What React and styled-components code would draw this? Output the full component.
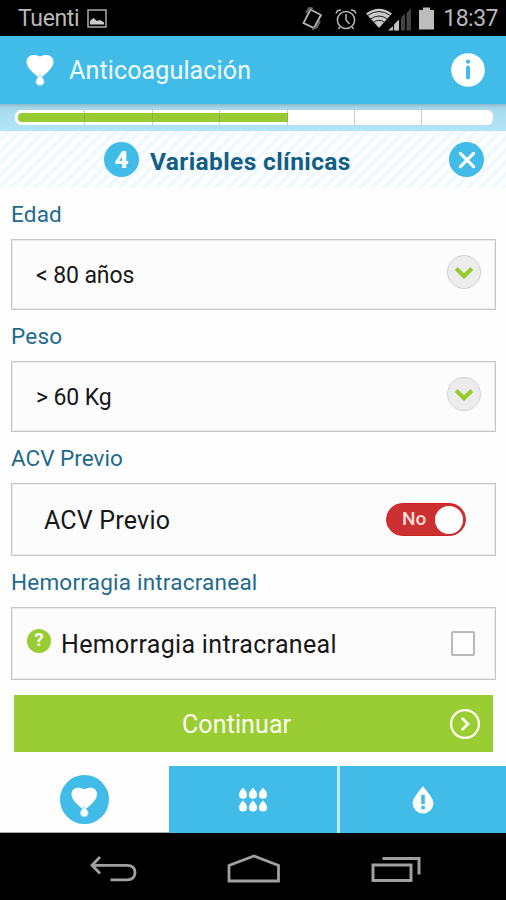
import React from "react";
import styled, { createGlobalStyle } from "styled-components";

const GlobalStyle = createGlobalStyle`
  *, *::before, *::after { box-sizing: border-box; }
  body { margin: 0; background: #fff; font-family: Roboto, sans-serif; }
  svg { display: block; flex: none; }
`;

const BLUE = "#41bce9";
const GREEN = "#9acd33";

const Screen = styled.div`
  width: 506px;
  height: 900px;
  display: flex;
  flex-direction: column;
  overflow: hidden;
  background: #fefefe;
`;

const Label = styled.span`
  font-size: ${(p) => p.$size}px;
  letter-spacing: ${(p) => p.$track || 0}px;
  font-weight: ${(p) => p.$weight || 400};
  line-height: 1.2;
  white-space: nowrap;
`;

const StatusBar = styled.div`
  height: 36px;
  flex: none;
  display: flex;
  align-items: center;
  justify-content: space-between;
  padding: 2px 8px 0 18px;
  background: #000;
  color: #b9b9b9;
`;

const StatusGroup = styled.div`
  display: flex;
  align-items: center;
  gap: 8px;
`;

const Header = styled.header`
  height: 68px;
  flex: none;
  display: flex;
  align-items: center;
  padding: 0 21px 0 26px;
  background: ${BLUE};
  color: #f2fbff;
`;

const HeaderTitle = styled.div`
  flex: 1;
  padding: 1px 0 0 15px;
`;

const ProgressStrip = styled.div`
  height: 27px;
  flex: none;
  padding: 6px 13px 0 15px;
  background: linear-gradient(#8db9cb 0, #a9d7ea 4px, #ade0f4 14px, #b2e4f7 100%);
`;

const ProgressTrack = styled.div`
  height: 15px;
  padding: 3px;
  display: flex;
  border-radius: 6px;
  background: #fff;
`;

const Segment = styled.div`
  width: ${(p) => p.$width}px;
  height: 15px;
  margin-top: -3px;
  padding: 3px 0;
  background: ${(p) => (p.$last ? "none" : "linear-gradient(#c9cbc9, #c9cbc9) right / 1px 100% no-repeat")};

  &::before {
    content: "";
    display: block;
    height: 9px;
    background: ${(p) => (p.$done ? "linear-gradient(90deg, #97cb30 calc(100% - 1px), #8fb54a 0)" : "transparent")};
    border-radius: ${(p) => (p.$first ? "4px 0 0 4px" : "0")};
  }
`;

const StepBar = styled.div`
  height: 57px;
  flex: none;
  display: flex;
  align-items: center;
  padding: 0 22px 0 104px;
  color: #125e84;
  background: repeating-linear-gradient(
    135deg,
    #fdffff 0,
    #fdffff 2.8px,
    #f0f9fd 4.6px,
    #f0f9fd 7px,
    #fdffff 8.5px
  );
`;

const StepTitle = styled.h1`
  flex: 1;
  margin: 0;
  padding: 4px 0 0 11px;
  font-size: 24px;
  line-height: 1.2;
  display: flex;
`;

const Badge = styled.span`
  width: ${(p) => p.$size}px;
  height: ${(p) => p.$size}px;
  flex: none;
  display: flex;
  align-items: center;
  justify-content: center;
  margin-bottom: ${(p) => p.$lift || 0}px;
  padding-top: ${(p) => p.$drop || 0}px;
  border-radius: 50%;
  background: ${(p) => p.$color};
  color: #fff;
`;

const Form = styled.main`
  flex: none;
  padding: 0 10px 0 11px;
`;

const FieldLabel = styled.div`
  height: 51px;
  padding-top: 13px;
  display: flex;
  color: #1e6a8d;
`;

const FieldBox = styled.div`
  height: ${(p) => p.$height}px;
  display: flex;
  align-items: center;
  justify-content: space-between;
  padding: 2px ${(p) => p.$right}px 0 ${(p) => p.$left}px;
  border: 1px solid #c6c6c6;
  box-shadow: inset 0 0 0 1px #ececec;
  background: #fcfcfc;
  color: #181818;
`;

const SelectKnob = styled.span`
  width: 34px;
  height: 34px;
  margin-bottom: 7px;
  padding-top: 2px;
  display: flex;
  align-items: center;
  justify-content: center;
  border: 1px solid #d2d2d2;
  border-radius: 50%;
  background: #ececec;
`;

const Toggle = styled.span`
  width: 80px;
  height: 33px;
  margin-bottom: 2px;
  display: flex;
  align-items: center;
  justify-content: space-between;
  padding: 0 2px 0 15px;
  border-radius: 17px;
  background: #cd3030;
  border: 1px solid #d02020;
  color: #ffdcdc;
`;

const ToggleDot = styled.span`
  width: 28px;
  height: 28px;
  border-radius: 50%;
  background: #fff;
`;

const CheckGroup = styled.div`
  display: flex;
  align-items: center;
  gap: 10px;
`;

const CheckBox = styled.span`
  width: 24px;
  height: 25px;
  margin-bottom: 2px;
  border: 2px solid #b9b9b9;
  border-radius: 2px;
  background: #fdfdfd;
`;

const Continue = styled.div`
  height: 57px;
  margin: 15px 13px 14px 14px;
  flex: none;
  display: grid;
  grid-template-columns: 1fr auto;
  align-items: center;
  padding: 3px 12px 0 168px;
  background: ${GREEN};
  color: #fafff0;

  svg { margin-bottom: 3px; }
`;

const Tabs = styled.nav`
  height: 67px;
  flex: none;
  display: grid;
  grid-template-columns: 169px 168px 1fr;
  background: #c4e9f8;
`;

const Tab = styled.div`
  display: flex;
  align-items: center;
  justify-content: center;
  margin-left: ${(p) => p.$gap || 0}px;
  background: ${(p) => (p.$active ? "#fefefe" : BLUE)};
  border-bottom: ${(p) => (p.$active ? "1px solid #a8a8a8" : "0")};
`;

const NavBar = styled.div`
  flex: 1;
  display: flex;
  align-items: center;
  justify-content: space-between;
  padding: 4px 85px 0 89px;
  background: #000;
`;

function StatusIcons() {
  return (
    <svg width="135" height="28" viewBox="300 4 135 28" fill="none" stroke="#b5b5b5" strokeWidth="1.5">
      <path d="M310.5 8.500 L321 14 L314 27 L303.500 22 Z" strokeWidth="1.800" />
      <path d="M306 12 L309 7 L313 7.500 M320 20 L317 26 L312 28.500" stroke="#666" strokeWidth="1.800" />
      <circle cx="346" cy="19" r="8.600" />
      <path d="M346 13 V19 L349.500 23 M336 12.500 A5 5 0 0 1 341 9 M351 9 A5 5 0 0 1 356 12.500 M340 26 L338.500 28 M352 26 L353.500 28" />
      <path d="M379 27 L366 12.500 Q379 3 392 12.500 Z" fill="#c9c9c9" stroke="none" />
      <path d="M367.500 14.500 Q379 6.500 390.500 14.500 M370.500 18 Q379 12 387.500 18 M373.500 21.300 Q379 17.300 384.500 21.300" stroke="#222" strokeWidth="1" />
      <path d="M388 29.500 L393 25 V29.500 Z" fill="#bbb" stroke="none" />
      <path d="M394 29.500 V23.500 L399 18.500 V29.500 Z" fill="#c4c4c4" stroke="none" />
      <path d="M401 29.500 V16.500 L405 12.500 V29.500 Z M406.500 29.500 V12 L411 7.500 V29.500 Z" fill="#444" stroke="none" />
      <path d="M419 9 H423 V6.500 H430 V9 H434 V28.500 H419 Z" fill="#bdbdbd" stroke="none" />
    </svg>
  );
}

function PictureIcon() {
  return (
    <svg width="20" height="21" viewBox="0 0 20 21" fill="none" stroke="#aaa" strokeWidth="1.5">
      <rect x="1" y="1" width="18" height="17" />
      <path d="M3 15.500 V12 L6.500 9 L10 12 L13 11 L17 13.500 V15.500 Z" fill="#ccc" stroke="none" />
    </svg>
  );
}

function HeartDrop({ width, ring }) {
  return (
    <svg width={width} height={width * 1.14} viewBox="0 0 28 32">
      <path d="M14 24.500 C10 21.500 6.500 18.600 4 15.600 C1.800 13 0.500 10.500 0.500 7.800 C0.500 3.700 3.500 0.900 7.400 0.900 C10 0.900 12 1.500 14 2.600 C16 1.500 18 0.900 20.600 0.900 C24.500 0.900 27.500 3.700 27.500 7.800 C27.500 10.500 26.200 13 24 15.600 C21.500 18.600 18 21.500 14 24.500 Z" fill="#fff" />
      <path d="M14 20.500 C15.300 23 18.100 25 18.100 27.600 A4.100 3.900 0 0 1 9.900 27.600 C9.900 25 12.700 23 14 20.500 Z" fill="#fff" stroke={ring} strokeWidth="0.900" />
    </svg>
  );
}

function InfoIcon() {
  return (
    <svg width="34" height="34" viewBox="0 0 34 34">
      <circle cx="17" cy="17" r="16.800" fill="#fff" />
      <circle cx="17" cy="8.700" r="2.100" fill={BLUE} />
      <path d="M17 14.500 V24.500" stroke={BLUE} strokeWidth="4" strokeLinecap="round" />
    </svg>
  );
}

function CrossIcon() {
  return (
    <svg width="18" height="18" viewBox="0 0 18 18" stroke="#fff" strokeWidth="3.200" strokeLinecap="round">
      <path d="M2.400 2.400 L15.600 15.600 M15.600 2.400 L2.400 15.600" />
    </svg>
  );
}

function ChevronIcon() {
  return (
    <svg width="20" height="14" viewBox="0 0 20 14" fill="none" stroke="#94cb28" strokeWidth="4">
      <path d="M2.200 2.500 L10 10.200 L17.800 2.500" />
    </svg>
  );
}

function NextIcon() {
  return (
    <svg width="32" height="32" viewBox="0 0 32 32" fill="none" stroke="#fbffee">
      <circle cx="16" cy="16" r="13.900" strokeWidth="2.300" />
      <path d="M13.600 10.700 L18.900 16 L13.600 21.300" strokeWidth="2.900" strokeLinecap="round" />
    </svg>
  );
}

function DropsIcon() {
  const drop = "c1.800 2 4.100 4.400 4.100 6.900 a4.100 4 0 0 1 -8.200 0 c0 -2.500 2.300 -4.900 4.100 -6.900 Z";
  return (
    <svg width="30" height="26" viewBox="0 0 30 26" fill="#fff">
      {[0, 12.8].flatMap((y) => [5, 15, 25].map((x) => <path key={`${x}-${y}`} d={`M${x} ${y + 0.8} ${drop}`} />))}
    </svg>
  );
}

function AlertDropIcon() {
  return (
    <svg width="22" height="28" viewBox="0 0 22 28">
      <path d="M11 0.300 C14.500 5 21.400 11.500 21.400 17.600 A10.400 9.800 0 0 1 0.600 17.600 C0.600 11.500 7.500 5 11 0.300 Z" fill="#fff" />
      <path d="M11 9 V18 M11 19.800 V23.200" stroke={BLUE} strokeWidth="3.600" />
    </svg>
  );
}

function BackIcon() {
  return (
    <svg width="48" height="28" viewBox="0 0 48 28" fill="none" stroke="#a0a0a0" strokeWidth="2.800">
      <path d="M11 2 L3 10.300 L11 18.500 M3 10.300 H38 Q46 10.300 46 17.500 Q46 24.800 38 24.800 H21.500" />
    </svg>
  );
}

function HomeIcon() {
  return (
    <svg width="54" height="30" viewBox="0 0 54 30" fill="none" stroke="#a0a0a0" strokeWidth="2.800">
      <path d="M2 27 V11.500 L27 2 L51.500 11.500 V27 Z" />
    </svg>
  );
}

function RecentsIcon() {
  return (
    <svg width="50" height="28" viewBox="0 0 50 28" fill="none" stroke="#a0a0a0" strokeWidth="3">
      <path d="M2 10 H40 V25.500 H2 Z M11.500 3.500 H48 V19.500" />
    </svg>
  );
}

function SelectField({ label, value }) {
  return (
    <>
      <FieldLabel>
        <Label $size={22.5} $track={0.2}>{label}</Label>
      </FieldLabel>
      <FieldBox $height={71} $left={24} $right={14}>
        <Label $size={23} $track={-0.1}>{value}</Label>
        <SelectKnob><ChevronIcon /></SelectKnob>
      </FieldBox>
    </>
  );
}

export default function App() {
  return (
    <Screen>
      <GlobalStyle />
      <StatusBar>
        <StatusGroup>
          <Label $size={23} $track={-0.35}>Tuenti</Label>
          <PictureIcon />
        </StatusGroup>
        <StatusGroup>
          <StatusIcons />
          <Label $size={23} $track={-0.5}>18:37</Label>
        </StatusGroup>
      </StatusBar>
      <Header>
        <HeartDrop width={28} ring="#9cdcf5" />
        <HeaderTitle><Label $size={25} $track={0.14}>Anticoagulación</Label></HeaderTitle>
        <InfoIcon />
      </Header>
      <ProgressStrip>
        <ProgressTrack>
          {[67, 68, 67, 68, 67, 67, 68].map((w, i) => (
            <Segment key={i} $width={w} $done={i < 4} $first={i === 0} $last={i === 6} />
          ))}
        </ProgressTrack>
      </ProgressStrip>
      <StepBar>
        <Badge $size={35} $color={BLUE} $drop={1}><Label $size={24} $weight={900}>4</Label></Badge>
        <StepTitle><Label $size={24.5} $track={0.38} $weight={700}>Variables clínicas</Label></StepTitle>
        <Badge $size={35} $color={BLUE}><CrossIcon /></Badge>
      </StepBar>
      <Form>
        <SelectField label="Edad" value="< 80 años" />
        <SelectField label="Peso" value="> 60 Kg" />
        <FieldLabel>
          <Label $size={22.5}>ACV Previo</Label>
        </FieldLabel>
        <FieldBox $height={73} $left={32} $right={29}>
          <Label $size={25} $track={0.2}>ACV Previo</Label>
          <Toggle><Label $size={19} $weight={500}>No</Label><ToggleDot /></Toggle>
        </FieldBox>
        <FieldLabel>
          <Label $size={22.5} $track={0.22}>Hemorragia intracraneal</Label>
        </FieldLabel>
        <FieldBox $height={73} $left={15} $right={20}>
          <CheckGroup>
            <Badge $size={24} $color={GREEN} $lift={8}><Label $size={19} $weight={700}>?</Label></Badge>
            <Label $size={25} $track={0.33}>Hemorragia intracraneal</Label>
          </CheckGroup>
          <CheckBox />
        </FieldBox>
      </Form>
      <Continue>
        <Label $size={25} $track={0.1}>Continuar</Label>
        <NextIcon />
      </Continue>
      <Tabs>
        <Tab $active>
          <Badge $size={49} $color={BLUE} $drop={6}><HeartDrop width={26.5} ring="#9cdcf5" /></Badge>
        </Tab>
        <Tab><DropsIcon /></Tab>
        <Tab $gap={3}><AlertDropIcon /></Tab>
      </Tabs>
      <NavBar>
        <BackIcon />
        <HomeIcon />
        <RecentsIcon />
      </NavBar>
    </Screen>
  );
}
